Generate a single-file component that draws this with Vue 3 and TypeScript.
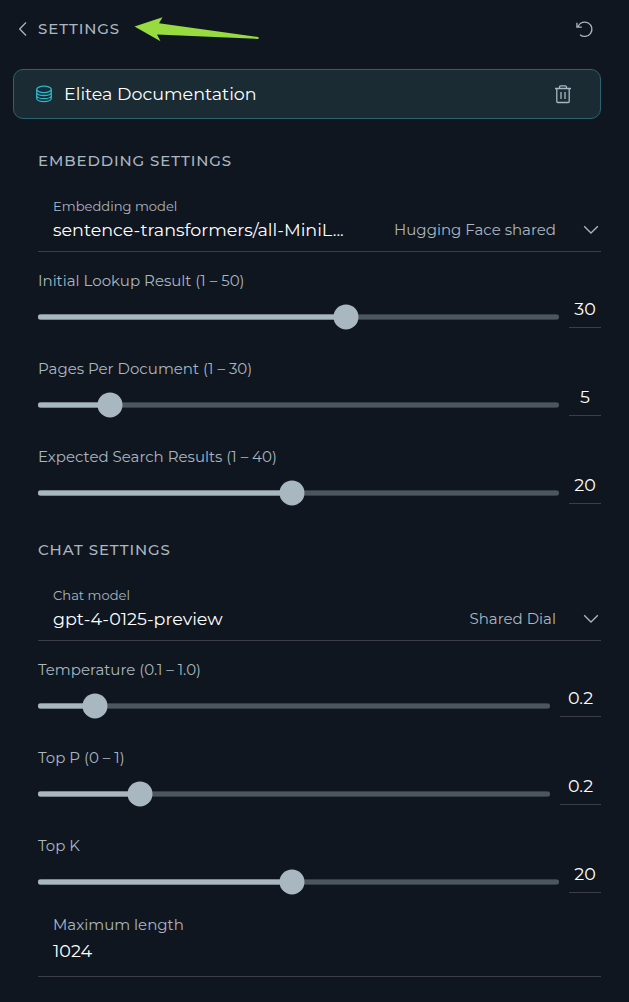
<script setup lang="ts">
interface SliderField {
  label: string
  min: number
  max: number
  value: number
  cls: string
}

const embedding: SliderField[] = [
  { label: 'Initial Lookup Result (1 – 50)', min: 1, max: 50, value: 30, cls: 'lookup' },
  { label: 'Pages Per Document (1 – 30)', min: 1, max: 30, value: 5, cls: 'pages' },
  { label: 'Expected Search Results (1 – 40)', min: 1, max: 40, value: 20, cls: 'results' },
]

const chat: SliderField[] = [
  { label: 'Temperature (0.1 – 1.0)', min: 0.1, max: 1, value: 0.2, cls: 'temperature' },
  { label: 'Top P (0 – 1)', min: 0, max: 1, value: 0.2, cls: 'top-p' },
  { label: 'Top K', min: 1, max: 40, value: 20, cls: 'top-k' },
]

const sections = [
  {
    title: 'EMBEDDING SETTINGS', cls: 'embedding', label: 'Embedding model',
    model: 'sentence-transformers/all-MiniL...', source: 'Hugging Face shared', sliders: embedding,
  },
  {
    title: 'CHAT SETTINGS', cls: 'chat', label: 'Chat model',
    model: 'gpt-4-0125-preview', source: 'Shared Dial', sliders: chat,
  },
]

const percent = (s: SliderField): string => `${((s.value - s.min) / (s.max - s.min)) * 100}%`
</script>

<template>
  <main class="panel">
    <header class="header">
      <svg class="back" width="10" height="16" viewBox="0 0 10 16"><path d="M8 1.500 1.700 8 8 14.500" /></svg>
      <h1>SETTINGS</h1>
      <svg class="arrow" width="140" height="36" viewBox="0 0 140 36">
        <path d="M4.500 15.500 32.500 6.300l-3.500 6 99.500 13.800v1.800L27 23.500l3.500 6.700Z" />
      </svg>
      <svg class="reset" width="20" height="20" viewBox="0 0 20 20">
        <path d="M6 15.700A7.200 7.200 0 1 0 4.100 7.400M2.900 3.700v4.500h4.900" />
      </svg>
    </header>

    <div class="card">
      <svg class="database" width="18" height="18" viewBox="0 0 18 18">
        <ellipse cx="9" cy="4.400" rx="7.300" ry="3.200" />
        <path d="M1.700 4.400v8.900c0 1.900 3.300 3.300 7.300 3.300s7.300-1.400 7.300-3.300V4.400M1.700 7.200c0 1.900 3.300 3.300 7.300 3.300s7.300-1.400 7.300-3.300M1.700 10.400c0 1.900 3.300 3.300 7.300 3.300s7.300-1.400 7.300-3.300" />
      </svg>
      <span class="card-title">Elitea Documentation</span>
      <svg class="trash" width="18" height="20" viewBox="0 0 18 20">
        <path d="M1 4.500h16M2.800 4.500v13q0 1 1 1h10.400q1 0 1-1v-13M5.500 4.500V3q0-1.200 1.200-1.200h4.600q1.200 0 1.200 1.200v1.500M7 8v7M11 8v7" />
      </svg>
    </div>

    <section v-for="s in sections" :key="s.title" :class="['section', s.cls]">
      <h2>{{ s.title }}</h2>
      <div class="select">
        <div class="field-label">{{ s.label }}</div>
        <div class="select-row">
          <div class="model">{{ s.model }}</div>
          <div class="source">{{ s.source }}</div>
          <svg class="chevron" width="16" height="10" viewBox="0 0 16 10"><path d="m1.200 1.200 6.800 6.800 6.800-6.800" /></svg>
        </div>
      </div>
      <div v-for="f in s.sliders" :key="f.label" :class="['slider-field', f.cls]">
        <div class="slider-label">{{ f.label }}</div>
        <div class="slider-row">
          <div class="slider">
            <div class="rail"></div>
            <div class="fill" :style="{ width: percent(f) }"></div>
            <div class="thumb" :style="{ left: percent(f) }"></div>
          </div>
          <div class="number">{{ f.value }}</div>
        </div>
      </div>
    </section>

    <div class="max-length">
      <div class="max-label">Maximum length</div>
      <div class="max-value">1024</div>
    </div>
  </main>
</template>

<style>
body {
  background: #10161f;
}
</style>

<style scoped>
.panel {
  width: 629px;
  height: 1002px;
  box-sizing: border-box;
  overflow: hidden;
  background: #10161f;
  color: #a9b7c1;
  font-family: Montserrat, Inter, sans-serif;
  font-size: 15px;
  white-space: nowrap;
}
svg {
  display: block;
  flex: none;
  fill: none;
  stroke: #a9b7c1;
  stroke-width: 1.3;
}
h1, h2 {
  margin: 0;
  font-size: 15px;
  font-weight: 500;
  letter-spacing: 0.9px;
}
.header {
  display: flex;
  align-items: center;
  height: 58px;
  padding: 0 35px 0 18px;
}
h1 {
  width: 82px;
  margin-left: 10px;
  padding-bottom: 2px;
}
.arrow {
  margin-left: 10px;
}
.arrow path {
  fill: #98db40;
  stroke: none;
}
.reset {
  margin-left: auto;
}
.card {
  display: flex;
  align-items: center;
  box-sizing: border-box;
  width: 588px;
  height: 50px;
  margin: 11px 0 20px 13px;
  padding: 0 28px 0 21px;
  border: 1px solid #2b626f;
  border-radius: 10px;
  background: #1a2b34;
}
.database {
  stroke: #29b8cb;
}
.card-title {
  margin-left: 11px;
  padding-bottom: 2px;
  color: #fff;
  font-size: 17.5px;
}
.trash {
  margin-left: auto;
}
.section, .max-length {
  margin: 0 28px 0 38px;
}
.chat {
  margin-top: 12px;
}
h2 {
  height: 44px;
  line-height: 44px;
}
.select {
  box-sizing: border-box;
  height: 69px;
  padding: 14px 0 0 15px;
  border-bottom: 1px solid #3b3e46;
}
.field-label {
  height: 19px;
  font-size: 13.1px;
  line-height: 18px;
}
.select-row {
  display: flex;
  align-items: center;
  height: 28px;
  padding-right: 2px;
}
.model {
  flex: 1;
  padding-bottom: 2px;
  color: #fff;
  font-size: 17.5px;
}
.source {
  padding-bottom: 2px;
}
.chevron {
  margin-left: 27px;
}
.slider-field {
  height: 88px;
}
.slider-label {
  height: 41px;
  padding-top: 19px;
  box-sizing: border-box;
  line-height: 20px;
}
.slider-row {
  display: flex;
  gap: 10px;
  height: 35px;
}
.slider {
  position: relative;
  flex: 1;
}
.rail, .fill {
  position: absolute;
  top: 21px;
  left: 0;
  height: 6px;
  border-radius: 3px;
  background: linear-gradient(#343e46 1px, #4b565e 1px 5px, #343e46 5px);
}
.rail {
  width: 100%;
}
.fill {
  background: linear-gradient(#7b878f 1px, #a9b7c1 1px 5px, #7b878f 5px);
}
.thumb {
  position: absolute;
  top: 11px;
  width: 25px;
  height: 25px;
  border-radius: 50%;
  background: #a9b7c1;
  transform: translate(-50%, 0.4px);
}
.number {
  box-sizing: border-box;
  width: 32px;
  border-bottom: 1px solid #3b3e46;
  color: #fff;
  font-size: 17.5px;
  line-height: 31px;
  text-align: center;
}
.temperature .number, .top-p .number {
  width: 41px;
}
.max-length {
  box-sizing: border-box;
  height: 72px;
  padding: 7px 0 0 15px;
  border-bottom: 1px solid #3b3e46;
}
.max-label {
  height: 26px;
  line-height: 26px;
}
.max-value {
  height: 26px;
  color: #fff;
  font-size: 17.5px;
  line-height: 26px;
}
</style>
